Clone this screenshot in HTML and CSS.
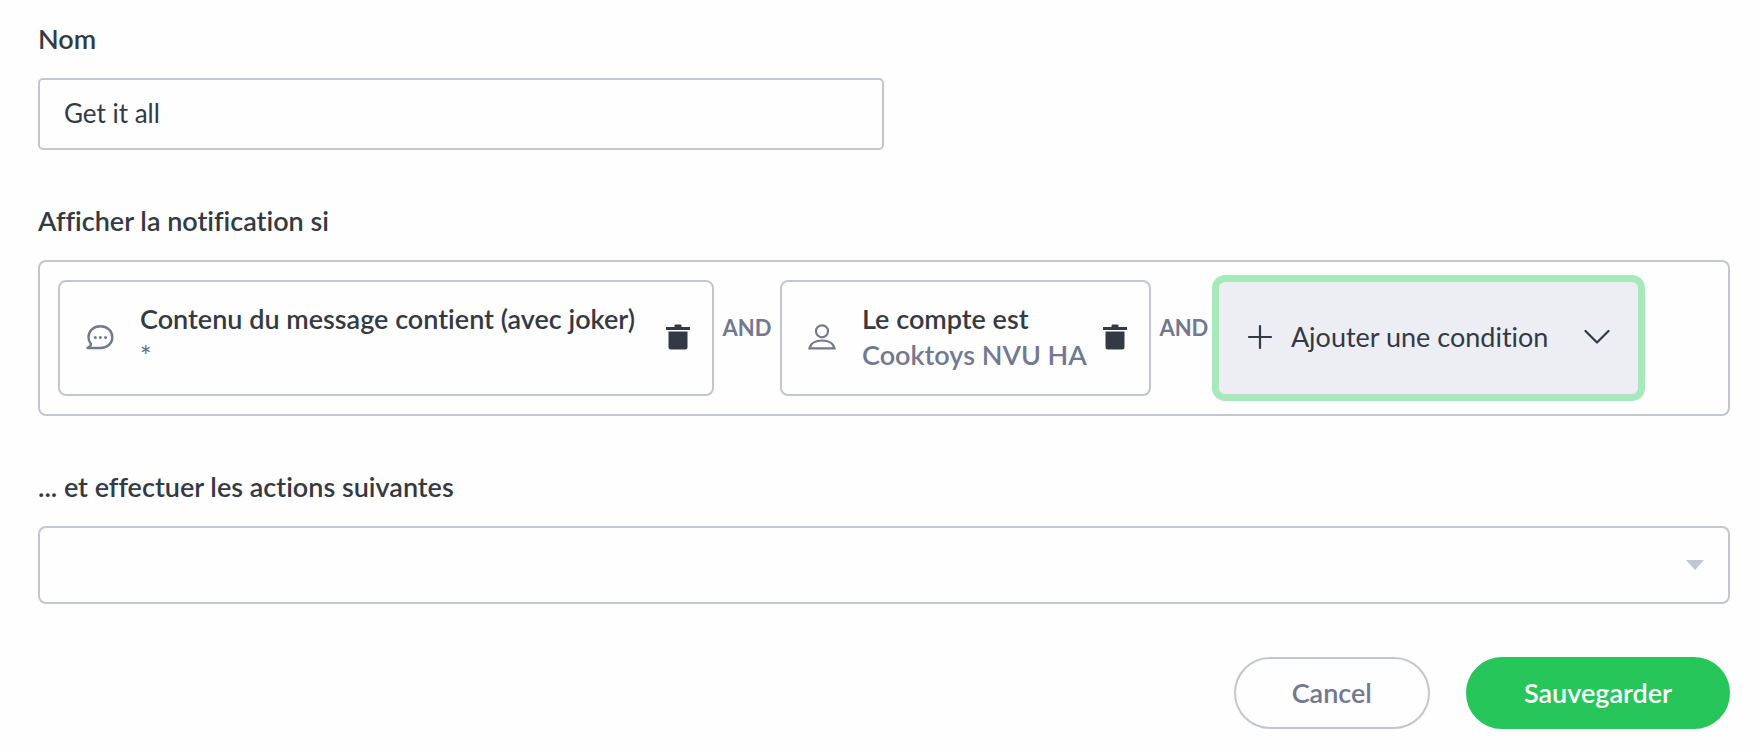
FILE: index.html
```html
<!DOCTYPE html>
<html lang="fr">
<head>
<meta charset="utf-8">
<meta name="viewport" content="width=device-width, initial-scale=1">
<title>Notification</title>
<link rel="stylesheet" href="styles.css">
</head>
<body>
<form class="form">
  <div class="field">
    <label class="label" for="name">Nom</label>
    <input class="input" id="name" type="text" value="Get it all">
  </div>

  <div class="field" role="group" aria-labelledby="conditions-label">
    <div class="label" id="conditions-label">Afficher la notification si</div>
    <div class="conditions">
      <div class="card card-wide">
        <svg class="card-icon" viewBox="0 0 28 28" fill="none" stroke="currentColor" stroke-width="2.4" stroke-linejoin="round">
          <path d="M1.500 25H14.500C21.500 25 26.300 20.500 26.300 14.200C26.300 8 21.300 3.300 14.400 3.300C7.500 3.300 2.500 8 2.500 14.200C2.500 17 3.500 19.300 5 21C4.800 23 3 24.200 1.500 25Z"/>
          <g fill="currentColor" stroke="none"><circle cx="9.300" cy="14.500" r="1.500"/><circle cx="14.400" cy="14.500" r="1.500"/><circle cx="19.500" cy="14.500" r="1.500"/></g>
        </svg>
        <div class="card-text">
          <div class="card-title">Contenu du message contient (avec joker)</div>
          <div class="card-value">*</div>
        </div>
        <button class="delete" type="button" aria-label="Supprimer la condition">
          <svg class="delete-icon" viewBox="0 0 24 26" fill="currentColor"><path d="M8.500 1.500Q8.500 .500 9.500 .500H14.500Q15.500 .500 15.500 1.500V3H24V6H0V3H8.500ZM2.500 7.500H21.500V23Q21.500 25.500 19 25.500H5Q2.500 25.500 2.500 23Z"/></svg>
        </button>
      </div>
      <span class="operator">AND</span>
      <div class="card">
        <svg class="card-icon" viewBox="0 0 28 28" fill="none" stroke="currentColor" stroke-width="2.200">
          <circle cx="14" cy="8.300" r="6"/>
          <path d="M1.500 25.300C2.500 20.500 7.300 17.500 14 17.500S25.500 20.500 26.500 25.300Z"/>
        </svg>
        <div class="card-text">
          <div class="card-title">Le compte est</div>
          <div class="card-value">Cooktoys NVU HA</div>
        </div>
        <button class="delete" type="button" aria-label="Supprimer la condition">
          <svg class="delete-icon" viewBox="0 0 24 26" fill="currentColor"><path d="M8.500 1.500Q8.500 .500 9.500 .500H14.500Q15.500 .500 15.500 1.500V3H24V6H0V3H8.500ZM2.500 7.500H21.500V23Q21.500 25.500 19 25.500H5Q2.500 25.500 2.500 23Z"/></svg>
        </button>
      </div>
      <span class="operator">AND</span>
      <button class="add" type="button">
        <svg class="add-icon" viewBox="0 0 26 26" fill="none" stroke="currentColor" stroke-width="2.200" stroke-linecap="round"><path d="M13 2V24M2 13H24"/></svg>
        <span class="add-text">Ajouter une condition</span>
        <svg class="add-icon" viewBox="0 0 26 26" fill="none" stroke="currentColor" stroke-width="2.200" stroke-linecap="round" stroke-linejoin="round"><path d="M1.500 7L13 18.500L24.500 7"/></svg>
      </button>
    </div>
  </div>

  <div class="field">
    <label class="label" for="actions">... et effectuer les actions suivantes</label>
    <div class="select-wrap">
      <select class="select" id="actions"><option></option></select>
      <svg class="caret" viewBox="0 0 18 10" fill="currentColor"><path d="M0 0H18L9 10Z"/></svg>
    </div>
  </div>

  <div class="footer">
    <button class="button button-cancel" type="button">Cancel</button>
    <button class="button button-save" type="submit">Sauvegarder</button>
  </div>
</form>
</body>
</html>
```
FILE: styles.css
```css
* {
  box-sizing: border-box;
}

body {
  margin: 0;
  background: #fefefe;
  color: #343a43;
  font-family: Lato, "Open Sans", sans-serif;
  font-size: 27px;
  font-variant-ligatures: none;
  line-height: 36px;
}

button,
input,
select {
  font: inherit;
  font-variant-ligatures: none;
  color: inherit;
}

.form {
  display: flex;
  flex-direction: column;
  gap: 53px;
  padding: 21px 30px 22px 38px;
}

.field {
  display: flex;
  flex-direction: column;
  gap: 21px;
}

.label {
  font-weight: 600;
}

.input {
  width: 50%;
  height: 72px;
  padding: 0 24px 2px;
  border: 2px solid #c3c6cf;
  border-radius: 5px;
  background: #fefefe;
  font-size: 26px;
}

.conditions {
  display: flex;
  padding: 18px;
  border: 2px solid #c3c6cf;
  border-radius: 8px;
}

.card {
  display: flex;
  align-items: center;
  min-height: 116px;
  padding: 0 22px 2px 26px;
  border: 2px solid #c3c6cf;
  border-radius: 8px;
}

.card-wide {
  min-width: 656px;
}

.card-icon {
  flex: none;
  width: 28px;
  height: 28px;
  margin-right: 26px;
  color: #71788f;
}

.card-text {
  flex: 1;
  font-weight: 600;
}

.card-value {
  color: #71788f;
}

.delete {
  display: flex;
  margin-left: 16px;
  padding: 0;
  border: 0;
  background: none;
}

.delete-icon {
  width: 24px;
  height: 26px;
}

.operator {
  align-self: center;
  width: 66px;
  padding-bottom: 20px;
  color: #71788f;
  font-size: 22px;
  font-weight: 700;
  text-align: center;
}

.add {
  display: flex;
  align-items: center;
  padding: 0 28px 2px;
  border: 2px solid #a8e9bc;
  border-radius: 8px;
  background: #edeef4;
  box-shadow: 0 0 0 5px #a8e9bc;
}

.add-icon {
  flex: none;
  width: 26px;
  height: 26px;
}

.add-text {
  margin: 0 36px 0 18px;
}

.select-wrap {
  position: relative;
}

.select {
  display: block;
  width: 100%;
  height: 78px;
  padding: 0 24px;
  border: 2px solid #c3c6cf;
  border-radius: 8px;
  background: #fefefe;
  appearance: none;
}

.caret {
  position: absolute;
  top: 34px;
  right: 26px;
  width: 18px;
  height: 10px;
  color: #c3c6cf;
  pointer-events: none;
}

.footer {
  display: flex;
  justify-content: flex-end;
  gap: 36px;
}

.button {
  height: 72px;
  padding: 0 56px;
  border: 2px solid #c3c6cf;
  border-radius: 36px;
  font-weight: 600;
}

.button-cancel {
  background: #fefefe;
  color: #71788f;
}

.button-save {
  border-color: #27c65a;
  background: #27c65a;
  color: #fff;
}
```
